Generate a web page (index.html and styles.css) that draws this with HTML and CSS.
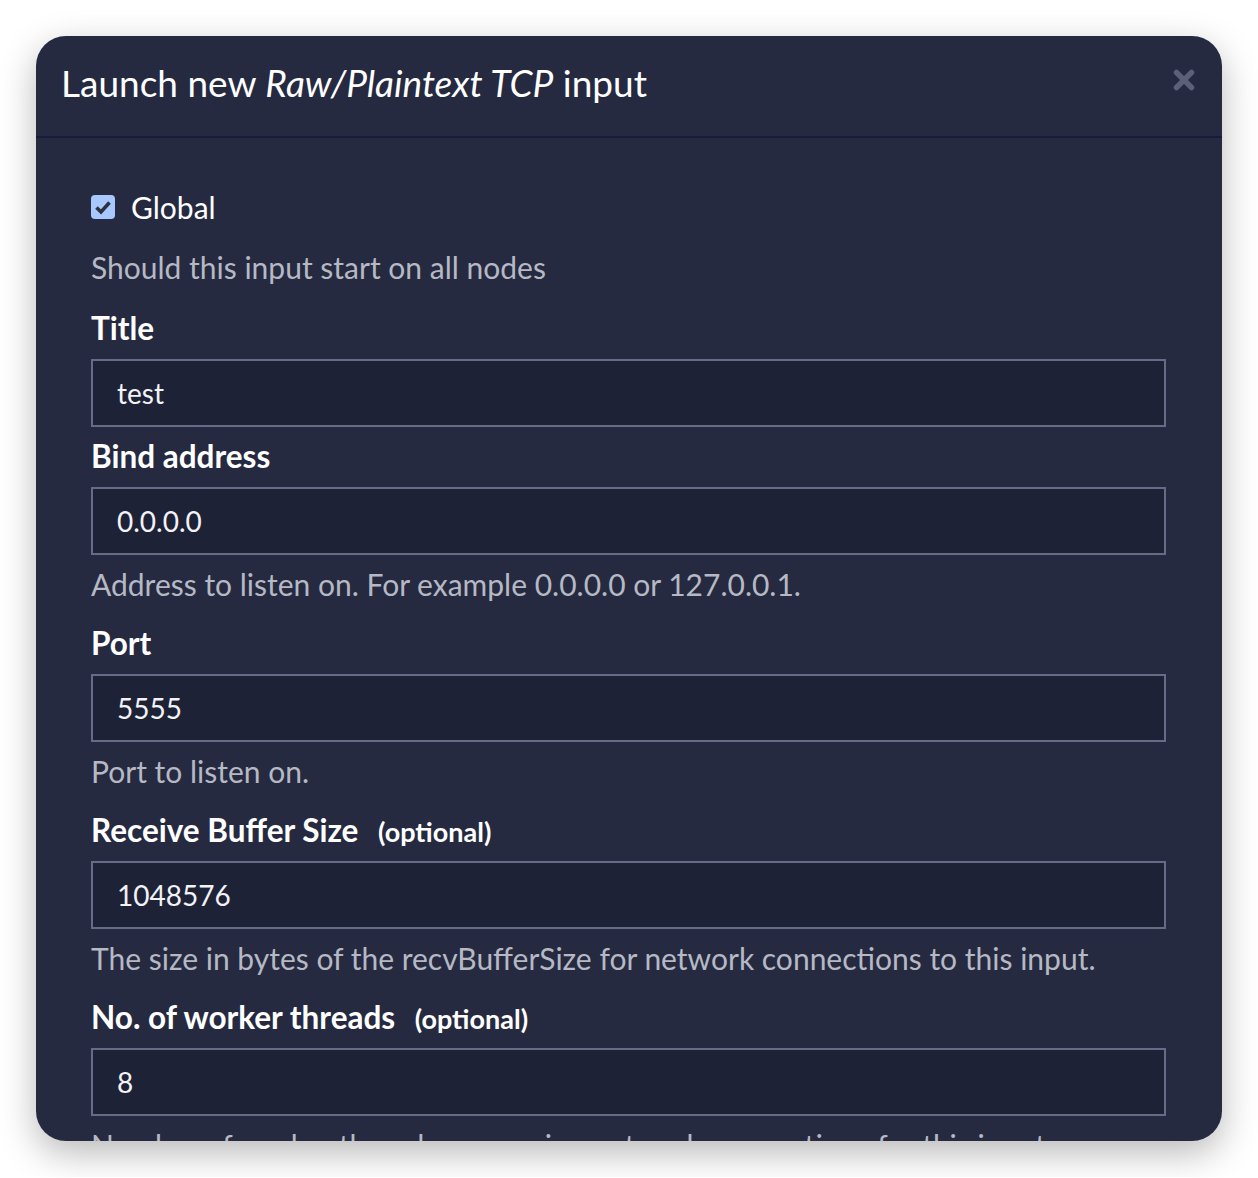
FILE: index.html
```html
<!DOCTYPE html>
<html lang="en">
<head>
  <meta charset="UTF-8">
  <meta name="viewport" content="width=device-width, initial-scale=1.0">
  <title>Launch new input</title>
  <link rel="stylesheet" href="styles.css">
</head>
<body>
  <div id="modal">
    <div class="modal-header">
      <h2>Launch new <em>Raw/Plaintext TCP</em> input</h2>
      <span class="close">
        <svg width="22" height="22" viewBox="0 0 22 22">
          <path d="M3.5 3.5 L18.5 18.5 M18.5 3.5 L3.5 18.5" stroke="#5b6079" stroke-width="5.5" stroke-linecap="round"/>
        </svg>
      </span>
    </div>
    <form class="modal-body">
      <div class="form-group">
        <label class="checkbox">
          <span class="check">
            <svg width="24" height="24" viewBox="0 0 24 24">
              <rect width="24" height="24" rx="4" fill="#a6c8ff"/>
              <path d="M5.5 12.5 L10 17 L18.5 7.5" fill="none" stroke="#2e3040" stroke-width="3.6"/>
            </svg>
          </span>
          Global
        </label>
        <p class="help">Should this input start on all nodes</p>
      </div>
      <div class="form-group">
        <label for="title">Title</label>
        <input type="text" id="title" value="test">
      </div>
      <div class="form-group">
        <label for="bind">Bind address</label>
        <input type="text" id="bind" value="0.0.0.0">
        <p class="help">Address to listen on. For example 0.0.0.0 or 127.0.0.1.</p>
      </div>
      <div class="form-group">
        <label for="port">Port</label>
        <input type="text" id="port" value="5555">
        <p class="help">Port to listen on.</p>
      </div>
      <div class="form-group">
        <label for="buffer">Receive Buffer Size <small>(optional)</small></label>
        <input type="text" id="buffer" value="1048576">
        <p class="help">The size in bytes of the recvBufferSize for network connections to this input.</p>
      </div>
      <div class="form-group">
        <label for="threads">No. of worker threads <small>(optional)</small></label>
        <input type="text" id="threads" value="8">
        <p class="help">Number of worker threads processing network connections for this input.</p>
      </div>
    </form>
  </div>
</body>
</html>
```
FILE: styles.css
```css
body {
  font-family: Lato, "Open Sans", sans-serif;
  margin: 0;
  padding: 36px;
  background-color: #fff;
}

#modal {
  width: 1186px;
  height: 1105px;
  background-color: #252a41;
  border-radius: 30px;
  overflow: hidden;
  box-shadow: 0 12px 36px rgba(0, 0, 0, 0.28);
}

.modal-header {
  height: 100px;
  border-bottom: 2px solid #1a1a3e;
  padding: 0 27px 0 25px;
  display: flex;
  align-items: center;
  justify-content: space-between;
}

h2 {
  margin: 0;
  color: #fff;
  font-size: 37px;
  font-weight: 400;
  padding-bottom: 8px;
}

.close {
  display: flex;
  padding-bottom: 12px;
}

.modal-body {
  padding: 49px 56px 0 55px;
}

.form-group {
  display: flex;
  flex-direction: column;
  margin-bottom: 9px;
}

label {
  display: block;
  height: 40px;
  color: #fff;
  font-size: 31.5px;
  font-weight: 700;
  line-height: 40px;
  margin-bottom: 11px;
}

label small {
  font-size: 27px;
  line-height: 1;
  margin-left: 12px;
}

label.checkbox {
  display: flex;
  align-items: center;
  gap: 16px;
  font-size: 30px;
  font-weight: 400;
  margin-bottom: 20px;
}

.check {
  display: flex;
}

input[type="text"] {
  display: block;
  box-sizing: border-box;
  width: 100%;
  height: 68px;
  margin: 0;
  padding: 0 24px;
  font-family: inherit;
  font-size: 28px;
  color: #f2f2f7;
  background-color: #1e2236;
  border: 2px solid #696a88;
  border-radius: 0;
  outline: none;
}

.help {
  margin: 9px 0 10px;
  height: 40px;
  color: #b6b9c4;
  font-size: 30px;
  line-height: 40px;
}

label.checkbox + .help {
  margin-top: 0;
  margin-bottom: 12px;
}
```
